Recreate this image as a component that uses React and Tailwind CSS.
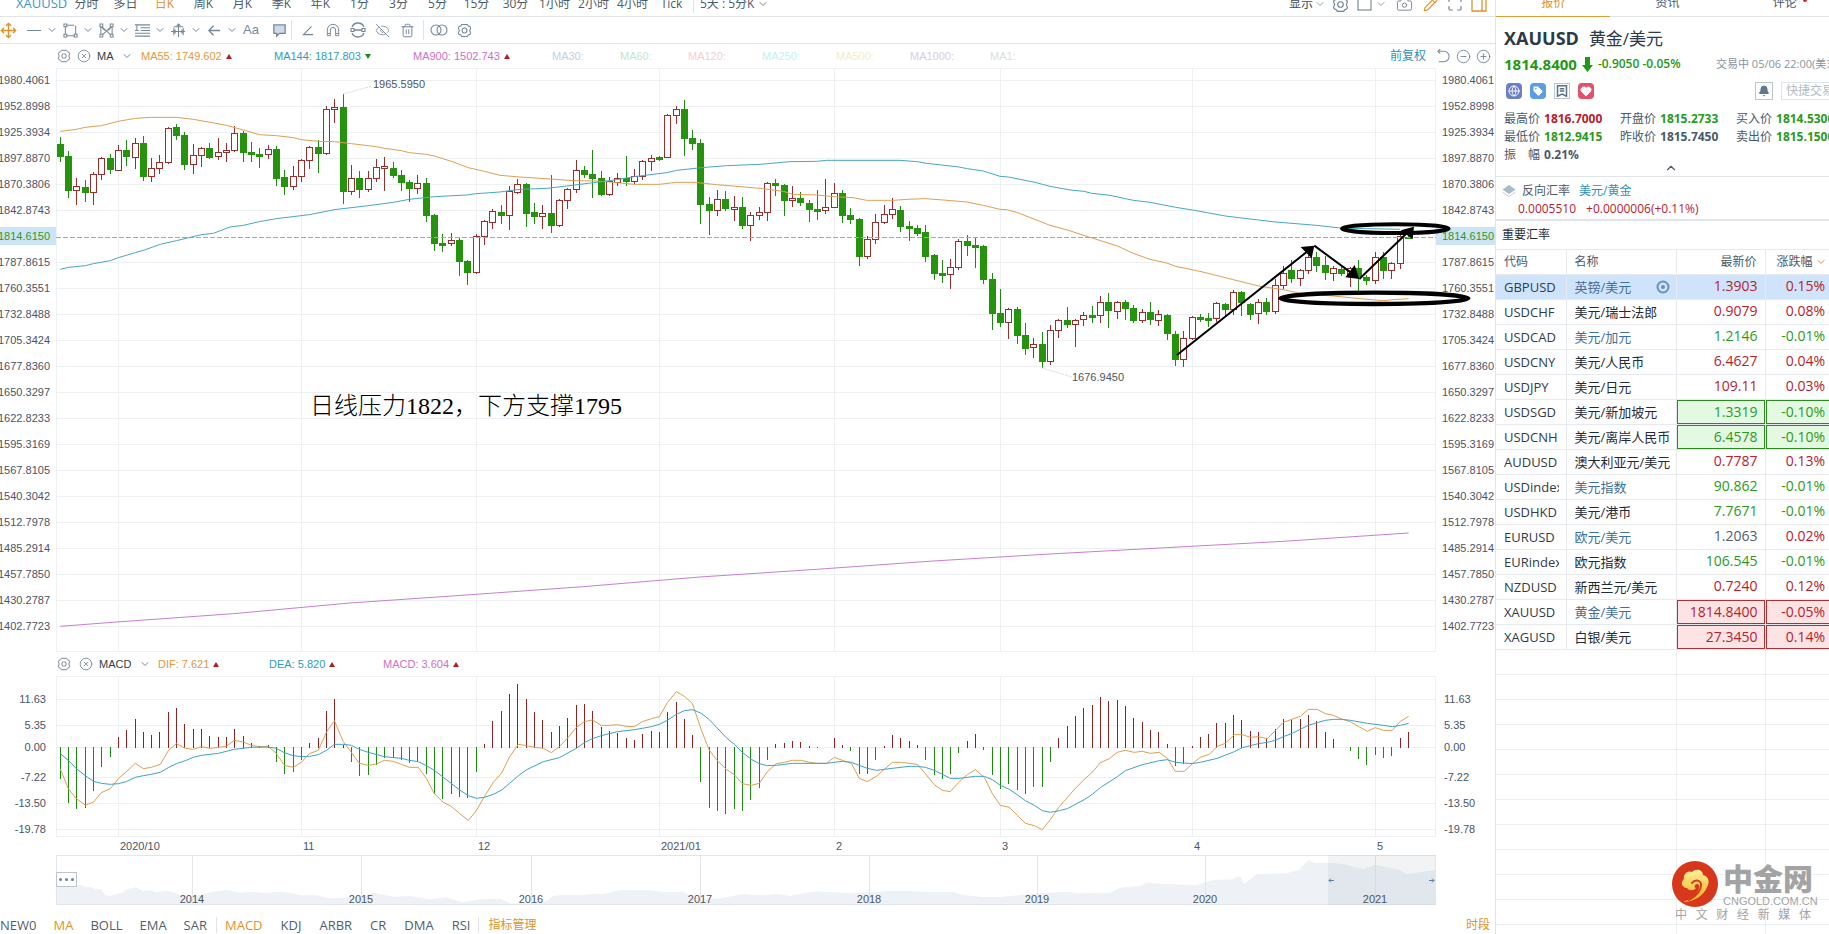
import {
  Move,
  ChevronDown,
  ChevronUp,
  EyeOff,
  Trash2,
  Camera,
  Pencil,
  Maximize,
  Globe,
  Tag,
  Heart,
  Bell,
  CircleMinus,
  CirclePlus,
  CircleX,
} from "lucide-react";

/* ---------- data ---------- */

// direction, high, body top, body bottom, low (plot units, 3 per pixel)
const CANDLES = `G411,432,470,486 G453,468,572,594 R534,559,571,614 G540,561,578,606 R516,523,577,614 R471,475,524,539
G462,474,510,521 R436,451,512,514 G420,450,471,497 R414,430,472,506 G408,429,530,542 R474,505,530,545
R465,487,506,521 R381,385,488,491 G372,381,407,419 G396,405,494,509 R432,466,493,521 R441,445,466,501
G429,444,474,476 R414,457,470,479 R429,451,458,486 R378,400,452,455 G393,399,458,486 G426,456,464,486
G444,462,470,503 R435,448,463,476 G438,447,536,557 G510,531,560,584 R498,529,560,569 R477,481,530,545
R438,442,482,506 G420,441,461,518 R318,328,461,464 R297,322,328,369 G282,321,575,611 R495,535,575,584
G513,534,569,593 R513,535,568,575 R477,502,536,545 R471,499,506,572 G486,504,527,533 G510,525,548,572
G540,546,566,605 R525,550,566,581 G534,549,647,665 G642,645,731,752 G702,729,737,755 R699,721,731,737
G714,720,785,827 G780,783,818,854 R703,709,818,821 R660,664,710,734 R627,634,668,686 G616,636,647,671
R558,574,647,689 R537,553,578,581 G549,552,641,680 G609,636,650,671 R615,640,649,686 G525,639,677,698
R596,601,677,680 R564,568,601,626 R480,511,569,578 G498,510,524,533 G450,522,536,593 G513,534,584,587
R530,544,584,587 R519,535,548,557 G468,535,545,557 R507,529,545,551 R480,484,530,539 R465,475,485,513
G468,471,480,483 R342,346,473,474 R318,328,346,371 G300,327,416,467 G390,414,431,449 G417,429,614,672
G591,612,632,704 R570,598,632,647 G573,597,626,632 R588,622,628,662 G591,621,677,686 R636,646,677,722
R621,637,647,659 R546,550,637,662 G537,549,557,587 G552,555,602,647 R558,595,602,620 G576,594,609,617
G600,609,629,665 G570,627,635,659 R537,622,632,641 R549,580,623,623 G570,579,647,668 G624,645,659,671
G654,657,770,797 R708,718,770,776 R642,667,718,731 R615,643,668,671 R594,628,643,656 G618,630,680,695
G663,678,686,722 G675,684,701,707 G675,696,770,785 G762,765,821,840 G780,818,827,848 R777,802,824,867
R717,724,803,810 G705,723,737,767 G714,735,743,804 G735,738,839,851 G819,837,941,989 G867,939,968,980
R925,928,968,1016 G921,927,1007,1031 G969,1005,1046,1065 R1014,1033,1043,1074 G996,1032,1085,1103 R975,991,1084,1094
R957,961,992,1013 G921,960,974,983 R957,961,974,1041 R936,946,959,977 G918,945,953,968 R888,907,947,968
G879,906,932,983 R903,907,935,956 G900,906,926,961 G915,924,962,968 R927,937,962,968 G906,936,960,974
R930,943,962,977 G942,945,1001,1019 G993,1002,1079,1098 R993,1015,1079,1100 R948,952,1016,1019 G942,951,959,965
G939,954,962,980 R906,910,956,965 G909,912,929,947 R870,877,929,944 G873,876,908,947 G909,911,944,959
R897,907,941,971 G894,906,935,944 R837,856,935,941 R798,820,857,866 G780,810,836,848 R808,811,836,857
R765,772,812,821 G756,771,797,815 G768,795,818,839 R798,805,820,842 G800,807,821,827 R800,805,822,860
G780,804,832,873 G826,831,842,854 R756,772,842,851 G756,771,812,836 R786,790,811,836 R700,709,791,806
G705,711,716,718`
  .split(/\s+/)
  .map((s) => ({ up: s[0] === "R", v: s.slice(1).split(",").map(Number) }));

const MA55 =
  "181,394 229,388 256,382 304,377 355,364 406,355 455,352 529,352 580,358 631,367 679,376 730,390 778,404 829,407 880,413 904,419 955,424 1003,425 1054,431 1129,440 1153,445 1204,452 1228,458 1279,463 1303,468 1354,484 1405,503 1453,514 1500,526 1560,531 1650,537 1720,542 1790,543 1850,548 1903,553 1978,553 2029,547 2085,547 2150,554 2280,565 2350,574 2378,583 2450,585 2500,590 2560,593 2600,601 2680,601 2720,598 2775,596 2830,600 2900,606 2950,616 3000,628 3020,629 3053,638 3150,676 3202,690 3270,712 3352,738 3400,760 3450,778 3500,789 3527,799 3600,814 3700,839 3780,859 3850,869 3900,880 4000,888 4080,896 4150,902 4180,899 4226,896";
const MA144 =
  "181,808 205,802 256,797 280,791 331,782 355,773 406,758 430,751 481,733 529,722 604,704 640,700 690,681 730,676 778,665 829,656 928,644 1003,629 1105,617 1180,607 1228,598 1303,590 1400,585 1429,581 1500,576 1560,568 1640,565 1700,558 1780,548 1850,539 1903,530 2000,518 2030,511 2104,503 2180,497 2280,493 2370,485 2450,484 2480,481 2700,481 2752,485 2780,490 2877,501 2902,506 2950,513 3000,529 3025,531 3105,547 3150,559 3210,570 3252,574 3275,580 3330,586 3400,601 3450,607 3527,622 3577,630 3676,648 3750,657 3826,666 3900,672 3950,676 4020,684 4100,686 4200,688";
const MA900 =
  "181,1879 350,1866 700,1841 1050,1809 1400,1785 1750,1760 2100,1731 2450,1708 2800,1683 3150,1662 3500,1643 3850,1624 4226,1599";

const MACD_BARS = [
  417, 488, 506, 503, 452, 380, 350, 291, 270, 238, 276, 286, 276, 216, 204, 252, 267, 267, 289, 292, 291, 267, 289,
  310, 318, 316, 365, 401, 395, 359, 310, 294, 213, 177, 314, 365, 407, 404, 374, 353, 353, 359, 368, 362, 401, 461,
  476, 461, 470, 473, 395, 313, 243, 213, 162, 132, 177, 216, 240, 276, 258, 234, 195, 192, 213, 261, 274, 279, 294,
  300, 283, 274, 277, 216, 186, 237, 286, 425, 503, 512, 521, 506, 512, 479, 443, 359, 313, 310, 304, 307, 318, 325,
  322, 294, 316, 332, 401, 401, 359, 318, 286, 294, 304, 316, 359, 404, 416, 401, 338, 304, 282, 329, 404, 446, 431,
  449, 461, 440, 440, 365, 294, 258, 228, 204, 195, 171, 183, 180, 198, 234, 247, 270, 277, 313, 377, 371, 318, 291,
  283, 250, 250, 225, 240, 273, 276, 297, 267, 237, 240, 237, 225, 243, 277, 297, 322, 333, 356, 374, 344, 353, 347,
  294, 276,
];
const DIF =
  "181,387 205,446 229,476 256,495 280,487 304,458 331,446 355,416 379,395 406,370 430,386 454,382 481,373 505,332 529,311 556,325 580,328 604,320 631,325 679,319 703,301 730,306 754,316 778,320 805,319 829,340 853,376 880,382 904,367 928,341 955,331 979,277 1003,242 1030,305 1054,337 1078,370 1105,376 1129,372 1153,361 1180,364 1204,373 1228,382 1255,382 1279,415 1303,461 1330,487 1354,499 1378,520 1405,541 1429,512 1453,470 1480,427 1505,399 1529,350 1555,313 1580,317 1603,322 1630,325 1654,338 1678,320 1703,294 1729,262 1753,245 1777,240 1804,256 1828,256 1852,254 1879,259 1903,260 1927,245 1954,236 1978,230 2002,188 2029,155 2053,169 2077,190 2104,270 2128,331 2152,362 2179,388 2203,404 2227,431 2254,436 2278,430 2302,395 2329,371 2353,367 2377,361 2404,361 2428,367 2452,370 2479,370 2503,352 2527,361 2554,370 2578,415 2602,425 2629,409 2653,388 2677,367 2704,367 2752,373 2776,401 2803,434 2827,451 2851,455 2878,425 2902,404 2926,389 2953,412 2977,461 3001,496 3028,502 3052,526 3076,550 3103,557 3127,569 3151,539 3178,500 3226,445 3253,418 3277,397 3301,368 3328,356 3352,337 3376,331 3403,337 3427,334 3451,340 3478,337 3502,355 3526,394 3553,394 3577,371 3601,352 3628,343 3652,319 3676,310 3703,284 3727,284 3751,292 3775,290 3802,296 3826,272 3850,247 3901,229 3925,208 3952,208 3976,221 4000,226 4027,238 4051,245 4075,259 4102,274 4126,263 4150,271 4177,271 4201,244 4226,229";
const DEA =
  "181,341 205,361 229,386 256,407 280,424 304,430 331,433 355,431 379,425 406,412 430,407 454,403 481,397 505,383 529,371 556,362 580,352 604,346 631,343 655,340 679,334 703,328 754,322 805,321 829,325 853,338 880,347 904,350 928,349 955,344 979,331 1003,313 1030,313 1054,316 1078,328 1105,337 1153,350 1204,355 1228,361 1255,365 1279,377 1303,391 1330,412 1378,449 1405,467 1429,475 1453,472 1480,463 1505,450 1529,430 1555,407 1580,389 1630,365 1678,353 1729,325 1753,308 1777,296 1804,287 1852,275 1903,269 1927,265 1954,260 1978,253 2002,241 2029,223 2053,212 2077,209 2104,220 2128,239 2179,293 2203,313 2227,337 2254,358 2278,371 2302,377 2329,376 2377,370 2479,370 2527,364 2554,367 2602,385 2629,391 2677,385 2728,379 2752,379 2776,382 2803,391 2851,415 2878,415 2926,409 2953,409 2977,419 3001,436 3028,448 3052,464 3076,482 3103,496 3127,512 3151,517 3178,512 3202,506 3253,479 3277,463 3301,443 3352,410 3376,392 3427,374 3478,362 3502,359 3526,367 3577,371 3601,367 3652,355 3703,335 3727,323 3751,317 3775,311 3802,307 3826,301 3850,290 3877,280 3901,268 3925,256 3952,248 3976,241 4000,238 4027,238 4051,241 4102,250 4150,256 4177,260 4201,256 4226,250";
const HISTORY =
  "169,742 240,735 262,742 270,740 285,747 303,747 315,765 330,768 370,757 375,750 405,742 430,752 450,750 470,757 500,752 515,755 545,767 577,770 640,755 680,750 720,758 760,755 800,760 830,755 870,758 900,766 950,766 980,773 1010,775 1084,768 1120,758 1180,770 1230,768 1290,778 1340,772 1370,782 1390,787 1440,778 1500,776 1535,792 1560,790 1600,790 1640,782 1660,767 1700,764 1740,766 1780,762 1810,763 1830,758 1860,750 1950,751 2000,757 2050,755 2075,770 2100,777 2160,775 2230,762 2280,766 2330,762 2370,768 2410,760 2450,754 2500,757 2560,759 2620,756 2660,753 2740,753 2800,757 2860,756 2890,765 2950,771 3000,771 3060,765 3140,758 3200,756 3240,760 3330,758 3360,743 3420,738 3440,728 3500,732 3590,735 3640,720 3700,718 3715,707 3725,715 3732,733 3745,722 3770,702 3860,700 3900,688 3925,659 3945,670 3980,668 4030,672 4060,680 4090,688 4126,674 4200,690 4220,703 4305,690";

const PRICES = [
  "1980.4061", "1952.8998", "1925.3934", "1897.8870", "1870.3806", "1842.8743", "1814.6150", "1787.8615",
  "1760.3551", "1732.8488", "1705.3424", "1677.8360", "1650.3297", "1622.8233", "1595.3169", "1567.8105",
  "1540.3042", "1512.7978", "1485.2914", "1457.7850", "1430.2787", "1402.7723",
];
const CURRENT = "1814.6150";

const MONTHS = [
  [118, "2020/10"], [301, "11"], [476, "12"], [659, "2021/01"], [834, "2"], [1000, "3"], [1192, "4"], [1375, "5"],
];
const YEARS = [
  [192, "2014"], [361, "2015"], [531, "2016"], [700, "2017"], [869, "2018"], [1037, "2019"], [1205, "2020"], [1375, "2021"],
];

const QUOTES = [
  ["GBPUSD", "英镑/美元", "1.3903", "0.15%", "r", true],
  ["USDCHF", "美元/瑞士法郎", "0.9079", "0.08%", "r"],
  ["USDCAD", "美元/加元", "1.2146", "-0.01%", "g", true],
  ["USDCNY", "美元/人民币", "6.4627", "0.04%", "r"],
  ["USDJPY", "美元/日元", "109.11", "0.03%", "r"],
  ["USDSGD", "美元/新加坡元", "1.3319", "-0.10%", "G"],
  ["USDCNH", "美元/离岸人民币", "6.4578", "-0.10%", "G"],
  ["AUDUSD", "澳大利亚元/美元", "0.7787", "0.13%", "r"],
  ["USDindex", "美元指数", "90.862", "-0.01%", "g", true],
  ["USDHKD", "美元/港币", "7.7671", "-0.01%", "g"],
  ["EURUSD", "欧元/美元", "1.2063", "0.02%", "n", true],
  ["EURindex", "欧元指数", "106.545", "-0.01%", "g"],
  ["NZDUSD", "新西兰元/美元", "0.7240", "0.12%", "r"],
  ["XAUUSD", "黄金/美元", "1814.8400", "-0.05%", "R", true],
  ["XAGUSD", "白银/美元", "27.3450", "0.14%", "R"],
];

const TONES = {
  r: "text-[#b5222e]",
  g: "text-[#2b9a1e]",
  n: "text-[#4f5f73]",
  R: "text-[#b5222e] bg-[#fde3e4] border border-[#a8323a]",
  G: "text-[#2b9a1e] bg-[#e4f9e2] border border-[#2d8a20]",
};

const LEFT = 56;
const WIDTH = 1380;
const barX = (i) => Math.floor(60.1 + i * 8.323);
const pct = (x) => `${((x - LEFT) / WIDTH) * 100}%`;

/* ---------- small pieces ---------- */

function Ico({ children, size = 15, className = "" }) {
  return (
    <svg width={size} height={size} viewBox="0 0 16 16" fill="none" stroke="currentColor" strokeWidth="1.1" className={className}>
      {children}
    </svg>
  );
}

function Hex({ size = 15 }) {
  return (
    <Ico size={size}>
      <path d="M5 1.5h6l1 1.7 2 .8.5 1.5-1 2.5 1 2.5-.5 1.5-2 .8-1 1.7H5l-1-1.7-2-.8-.5-1.5 1-2.5-1-2.5L2 4l2-.8z" />
      <circle cx="8" cy="8" r="2.6" />
    </Ico>
  );
}

function Tri({ down, className = "" }) {
  return (
    <svg width="6" height="5" viewBox="0 0 6 5" className={className}>
      {down ? <path d="M0 0h6L3 5z" fill="#1f8a12" /> : <path d="M0 5h6L3 0z" fill="#b01c24" />}
    </svg>
  );
}

function Tool({ label, children }) {
  return (
    <button aria-label={label} aria-haspopup="menu" className="flex w-9 items-center gap-1">
      {children}
      <ChevronDown size={12} strokeWidth={2} />
    </button>
  );
}

function Icon25({ label, children }) {
  return (
    <button aria-label={label} className="flex w-[25px] items-center justify-center">
      {children}
    </button>
  );
}

/* ---------- top bars ---------- */

function PeriodBar() {
  const periods = ["分时", "多日", "日K", "周K", "月K", "季K", "年K", "1分", "3分", "5分", "15分", "30分", "1小时", "2小时", "4小时", "Tick"];
  return (
    <header className="h-[17px] shrink-0 overflow-hidden border-b border-[#dfe4e8]">
      <div className="-mt-2 flex h-6 items-center text-[12px] text-[#4b5a69]">
        <button className="w-[67px] pl-4 text-left text-[13px] text-[#3b97c9]">XAUUSD</button>
        {periods.map((p) => (
          <button key={p} className={p === "日K" ? "w-[39px] text-[#e0932a]" : "w-[39px] whitespace-nowrap"}>
            {p}
          </button>
        ))}
        <button className="ml-[2px] flex items-center gap-[3px] border-l border-[#dfe4e8] pl-[6px]">
          5天 : 5分K <ChevronDown size={12} strokeWidth={1.5} />
        </button>
        <div className="ml-auto flex items-center text-[#6f8396]">
          <button className="flex w-[43px] items-center text-[#3c4a58]">
            显示 <ChevronDown size={12} strokeWidth={1.5} className="ml-px text-[#6f8396]" />
          </button>
          <button aria-label="设置" className="w-[25px]"><Hex size={17} /></button>
          <button aria-label="布局" className="flex w-[39px] items-center gap-[2px]">
            <Ico size={16}><rect x="1" y="1" width="13" height="13" /></Ico>
            <ChevronDown size={12} strokeWidth={1.5} />
          </button>
          <button aria-label="截图" className="w-[27px]"><Camera size={17} strokeWidth={1.3} /></button>
          <button aria-label="画线" className="w-6 text-[#e0932a]"><Pencil size={15} strokeWidth={1.8} /></button>
          <button aria-label="全屏" className="w-6"><Maximize size={16} strokeWidth={1.8} /></button>
          <button aria-label="侧栏" className="w-6 text-[#e0932a]">
            <Ico size={16}><path d="M1 1h14v14H1zM11 1v14" strokeWidth="1.3" /></Ico>
          </button>
        </div>
      </div>
    </header>
  );
}

function DrawBar() {
  return (
    <div className="flex h-[27px] shrink-0 items-center border-b border-[#dfe4e8] text-[#75899b]">
      <button aria-label="移动" className="w-[27px] text-[#e0932a]"><Move size={17} strokeWidth={2} /></button>
      <Tool label="直线"><Ico><path d="M0 8h15" /></Ico></Tool>
      <Tool label="矩形">
        <Ico><path d="M3 2.500h9M3 13.500h9M2.500 3v10M13.500 3v9" /><path d="M1 1h3v3H1zM12 12h3v3h-3zM1 12h3v3H1z" fill="#fff" /></Ico>
      </Tool>
      <Tool label="形态">
        <Ico><path d="M2 14V3l12 11V3L2 14M2 3l4 5M14 3l-4 5" /><path d="M1 1h3v3H1zM12 1h3v3h-3zM1 12h3v3H1zM12 12h3v3h-3z" fill="#fff" /></Ico>
      </Tool>
      <Tool label="斐波那契">
        <Ico><path d="M0 2h16M6 5h10M0 8h4M6 8h10M0 11h16M0 14h16M2 2v6" /></Ico>
      </Tool>
      <Tool label="测量">
        <Ico><path d="M0 9h15M8 1v14M3 5v8M13 5v8M3 4h10M6 3l2-2 2 2M5 7L3 9l2 2M11 7l2 2-2 2" /></Ico>
      </Tool>
      <Tool label="箭头"><Ico><path d="M14 8H2M7 3L2 8l5 5" strokeWidth="1.400" /></Ico></Tool>
      <button className="w-6 text-left font-['Liberation_Sans',sans-serif] text-[13px]">Aa</button>
      <button aria-label="注释" className="flex w-6 justify-center">
        <Ico><path d="M2 2h12v9H8l-3 3v-3H2z" fill="#cfdbe6" strokeWidth="1.400" /></Ico>
      </button>
      <span className="h-5 w-px bg-[#dfe4e8]" />
      <div className="flex px-[3px]">
        <Icon25 label="角度"><Ico size={13}><path d="M13 3L3 13h12" strokeWidth="1.400" /></Ico></Icon25>
        <Icon25 label="磁铁">
          <Ico size={14}><path d="M1.500 14.500V8a6.500 6.500 0 0 1 13 0v6.500h-3.500V8a3 3 0 0 0-6 0v6.500zM1.500 12H5M11 12h3.500" /></Ico>
        </Icon25>
        <Icon25 label="连续画线">
          <Ico size={16}><path d="M2 5a6.500 6.500 0 0 1 12 0M2 11a6.500 6.500 0 0 0 12 0M4 8h8" strokeWidth="1.300" /><path d="M1 6.500h3v3H1zM12 6.500h3v3h-3z" /></Ico>
        </Icon25>
        <Icon25 label="隐藏"><EyeOff size={15} strokeWidth={1.4} /></Icon25>
        <Icon25 label="删除"><Trash2 size={15} strokeWidth={1.6} /></Icon25>
      </div>
      <span className="h-5 w-px bg-[#dfe4e8]" />
      <button aria-label="叠加" className="w-[33px] pl-[6px]">
        <svg width="18" height="12" viewBox="0 0 18 12" fill="none" stroke="currentColor" strokeWidth="1.100">
          <circle cx="6" cy="6" r="5" /><circle cx="12" cy="6" r="5" />
        </svg>
      </button>
      <button aria-label="画线设置"><Hex /></button>
    </div>
  );
}

/* ---------- charts ---------- */

function MaHeader() {
  return (
    <div className="flex h-6 shrink-0 items-center pl-[57px] font-['Liberation_Sans','Noto_Sans_CJK_SC',sans-serif] text-[11px] text-[#75899b]">
      <button aria-label="指标设置" className="w-5"><Hex size={14} /></button>
      <button aria-label="关闭指标" className="w-5"><CircleX size={14} strokeWidth={1.5} /></button>
      <label className="flex w-11 items-center">
        <select aria-label="主图指标" className="w-6 appearance-none text-[11px] text-[#333e4a]"><option>MA</option></select>
        <ChevronDown size={12} strokeWidth={2} />
      </label>
      <span className="flex w-[133px] items-center gap-1 text-[#dd9a3f]">MA55: 1749.602 <Tri /></span>
      <span className="flex w-[139px] items-center gap-1 text-[#2f9dba]">MA144: 1817.803 <Tri down /></span>
      <span className="flex w-[139px] items-center gap-1 text-[#c872cc]">MA900: 1502.743 <Tri /></span>
      <span className="w-[68px] text-[#bcd2ea]">MA30:</span>
      <span className="w-[68px] text-[#c2e6d0]">MA60:</span>
      <span className="w-[74px] text-[#f3cfcf]">MA120:</span>
      <span className="w-[74px] text-[#c3eff5]">MA250:</span>
      <span className="w-[74px] text-[#f3edc0]">MA500:</span>
      <span className="w-20 text-[#dccbe6]">MA1000:</span>
      <span className="text-[#dddddd]">MA1:</span>
      <div className="ml-auto flex items-center gap-[5px] pr-1">
        <button className="mr-[5px] text-[12px] text-[#2f8fc0]">前复权</button>
        <button aria-label="重置"><Ico><path d="M2 2.500h6.500a5.500 5.500 0 0 1 0 11H3M4.500 0L2 2.500 4.500 5" /></Ico></button>
        <button aria-label="缩小"><CircleMinus size={15} strokeWidth={1.5} /></button>
        <button aria-label="放大"><CirclePlus size={15} strokeWidth={1.5} /></button>
      </div>
    </div>
  );
}

function PriceAxis({ right }) {
  return (
    <div className={right ? "w-[59px] shrink-0" : "w-14 shrink-0 overflow-hidden"}>
      <div className="-mt-px flex flex-col">
        {PRICES.map((p) => (
          <div key={p} className="flex h-[26px] items-center">
            <span
              className={
                (right ? "w-full pl-[6px] " : "flex w-full justify-end pr-[6px] ") +
                (p === CURRENT ? "bg-[#cde4f7] text-[#2b9a1e] leading-[18px]" : "leading-[18px]")
              }
            >
              {p}
            </span>
          </div>
        ))}
      </div>
    </div>
  );
}

function Candle({ i, up, v }) {
  const [hi, top, bot, lo] = v;
  const x = barX(i);
  if (up) {
    const t = Math.floor(top / 3);
    const b = Math.floor(bot / 3);
    return (
      <>
        <path d={`M${x + 0.5} ${Math.round(hi / 3)}V${Math.round(lo / 3)}`} stroke="#96302f" />
        <rect x={x - 2.5} y={t + 0.5} width="6" height={Math.max(b - t, 2)} fill="#fff" stroke="#96302f" />
      </>
    );
  }
  const t = Math.round(top / 3);
  return (
    <>
      <path d={`M${x + 0.5} ${Math.round(hi / 3)}V${Math.round(lo / 3)}`} stroke="#1f8a12" />
      <rect x={x - 3} y={t} width="7" height={Math.max(Math.round(bot / 3) - t, 2)} fill="#26930f" />
    </>
  );
}

function Curve({ points, color }) {
  return <polyline points={points} fill="none" stroke={color} strokeWidth="1" vectorEffect="non-scaling-stroke" transform="scale(0.33333)" />;
}

function PriceChart() {
  return (
    <div className="relative z-10 min-w-0 flex-1">
      <svg viewBox="56 68 1380 584" preserveAspectRatio="none" className="h-[584px] w-full overflow-visible">
        <g shapeRendering="crispEdges" stroke="#edf1f3">
          <rect x="56.5" y="68.5" width="1379" height="583" fill="none" />
          {PRICES.map((p, i) => p !== CURRENT && <path key={p} d={`M56 ${80.5 + i * 26}h1380`} />)}
          {MONTHS.map(([x]) => (
            <path key={x} d={`M${x + 0.5} 68v584`} />
          ))}
        </g>
        <g shapeRendering="crispEdges">
          {CANDLES.map((c, i) => (
            <Candle key={i} i={i} up={c.up} v={c.v} />
          ))}
        </g>
        <path d="M56 237.500H1436" stroke="#d6a05a" strokeDasharray="5 2" />
        <Curve points={MA55} color="#dda052" />
        <Curve points={MA144} color="#48a7c2" />
        <Curve points={MA900} color="#c77fd0" />
        <path d="M343 94l29-8M1042 368l30 9" stroke="#d5dade" strokeDasharray="2 1" />
        {/* hand-drawn trend marks */}
        <g transform="scale(0.33333)" fill="none" stroke="#000">
          <ellipse cx="4186" cy="686" rx="160" ry="13" strokeWidth="12" />
          <ellipse cx="4123" cy="895" rx="282" ry="17" strokeWidth="13" />
          <path d="M3531 1065L3930 748M3943 737L4065 827M4078 837L4228 692" strokeWidth="6" />
          <path d="M3943 737l-41 4 33 34zM4078 837l-14-42-28 37zM4242 680l-40 11 36 27z" fill="#000" stroke="none" />
        </g>
      </svg>
      <span className="absolute top-2 left-[317px] leading-4">1965.5950</span>
      <span className="absolute top-[301px] left-[1016px] leading-4">1676.9450</span>
      <p className="absolute top-[322px] left-[254px] font-['Liberation_Serif','Noto_Sans_CJK_SC',serif] text-[24px] leading-8 font-light text-black">
        日线压力1822，下方支撑1795
      </p>
    </div>
  );
}

function MacdHeader() {
  return (
    <div className="flex h-6 shrink-0 items-center pl-[57px] font-['Liberation_Sans',sans-serif] text-[11px] text-[#75899b]">
      <button aria-label="指标设置" className="w-[22px]"><Hex size={14} /></button>
      <button aria-label="关闭指标" className="w-5"><CircleX size={14} strokeWidth={1.5} /></button>
      <label className="flex w-[59px] items-center">
        <select aria-label="副图指标" className="w-10 appearance-none text-[11px] text-[#333e4a]"><option>MACD</option></select>
        <ChevronDown size={12} strokeWidth={2} />
      </label>
      <span className="flex w-[111px] items-center gap-1 text-[#dd9a3f]">DIF: 7.621 <Tri /></span>
      <span className="flex w-[114px] items-center gap-1 text-[#2f9dba]">DEA: 5.820 <Tri /></span>
      <span className="flex items-center gap-1 text-[#c872cc]">MACD: 3.604 <Tri /></span>
    </div>
  );
}

function MacdAxis({ right }) {
  const cls = right ? "w-[59px] pl-2" : "w-14 pr-[10px] text-right";
  return (
    <div className={cls + " h-[161px] shrink-0 pt-[10px] leading-[26px]"}>
      <div>11.63</div>
      <div className="h-6">5.35</div>
      <div className="h-[28px] leading-[22px]">0.00</div>
      <div>-7.22</div>
      <div>-13.50</div>
      <div>-19.78</div>
    </div>
  );
}

function MacdChart() {
  return (
    <div className="min-w-0 flex-1">
      <svg viewBox="56 36 1380 161" preserveAspectRatio="none" className="h-[161px] w-full">
        <g shapeRendering="crispEdges" stroke="#edf1f3">
          <rect x="56.5" y="36.5" width="1379" height="160" fill="none" />
          {[59, 85, 107, 137, 163, 189].map((y) => (
            <path key={y} d={`M56 ${y + 0.5}h1380`} />
          ))}
          {MONTHS.map(([x]) => (
            <path key={x} d={`M${x + 0.5} 36v161`} />
          ))}
        </g>
        <g shapeRendering="crispEdges">
          {MACD_BARS.map((v, i) => (
            <path key={i} d={`M${barX(i) + 0.5} ${v < 322 ? 108 : 107}V${Math.round(v / 3)}`} stroke={v < 322 ? "#8c2424" : "#1f8a12"} />
          ))}
        </g>
        <Curve points={DIF} color="#dda052" />
        <Curve points={DEA} color="#3fa3c4" />
      </svg>
    </div>
  );
}

function Navigator() {
  return (
    <div className="relative mr-[59px] ml-14 h-[50px] shrink-0">
      <svg viewBox="56 215 1380 50" preserveAspectRatio="none" className="h-full w-full">
        <polygon points={`169,795 ${HISTORY} 4305,795`} fill="#eef2f6" transform="scale(0.33333)" />
        <g shapeRendering="crispEdges" stroke="#e1e6ea" fill="none">
          <rect x="56.5" y="215.5" width="1379" height="49" />
          {YEARS.map(([x]) => (
            <path key={x} d={`M${x + 0.5} 215v50`} />
          ))}
        </g>
        <rect x="1328" y="215" width="107" height="50" fill="#8a9bab" opacity="0.12" />
        <path d="M1334 240.500h-5m2-2l-2 2 2 2M1429 240.500h5m-2-2l2 2-2 2" stroke="#5d7ea0" fill="none" />
      </svg>
      {YEARS.map(([x, y]) => (
        <span key={y} className="absolute bottom-0 -translate-x-1/2 leading-3" style={{ left: pct(x) }}>
          {y}
        </span>
      ))}
      <button aria-label="更多" className="absolute top-[17px] left-0 flex h-[15px] w-[21px] items-center justify-center gap-[3px] border border-[#b9c6d2] bg-white">
        <i className="size-[3px] rounded-full bg-[#6f8396]" />
        <i className="size-[3px] rounded-full bg-[#6f8396]" />
        <i className="size-[3px] rounded-full bg-[#6f8396]" />
      </button>
    </div>
  );
}

function IndicatorBar() {
  const item = (t) => (
    <button key={t} className={t === "MA" || t === "MACD" ? "text-[#e0932a]" : ""}>
      {t}
    </button>
  );
  return (
    <footer className="flex items-center pt-3 text-[13px] leading-4 text-[#4f5f70]">
      <div className="flex gap-[17px] pr-[9px]">{["NEW0", "MA", "BOLL", "EMA", "SAR"].map(item)}</div>
      <div className="flex gap-[18px] border-x border-[#dfe4e8] px-2">
        {["MACD", "KDJ", "ARBR", "CR", "DMA", "RSI"].map(item)}
      </div>
      <button className="ml-[9px] text-[12px] text-[#e0932a]">指标管理</button>
      <button className="mr-[5px] ml-auto text-[12px] text-[#e0932a]">时段</button>
    </footer>
  );
}

/* ---------- side panel ---------- */

function Stat({ label, value, tone }) {
  return (
    <div className="flex gap-1">
      <dt className="whitespace-pre">{label}</dt>
      <dd className={"font-bold " + tone}>{value}</dd>
    </div>
  );
}

function Quote() {
  return (
    <section className="border-b border-[#dfe4e8] pl-2 text-[12px] text-[#4b5a69]">
      <h1 className="flex items-center gap-[10px] pt-2 leading-[27px] text-[#2b3a48]">
        <b className="text-[18px]">XAUUSD</b>
        <span className="text-[17px]">黄金/美元</span>
      </h1>
      <div className="flex h-6 items-center font-bold text-[#1f9a12]">
        <span className="text-[15px]">1814.8400</span>
        <svg width="11" height="15" viewBox="0 0 11 15" className="mx-[5px]" fill="currentColor"><path d="M3 0h5v8h3l-5.500 7L0 8h3z" /></svg>
        <span className="font-semibold">-0.9050 -0.05%</span>
        <span className="ml-auto w-[131px] text-[11px] font-normal whitespace-nowrap text-[#8794a2]">交易中 05/06 22:00(美东)</span>
      </div>
      <div className="flex h-[30px] items-center gap-2 pl-[2px] text-white">
        <span className="flex size-4 items-center justify-center rounded-sm bg-[#6a7fc4]"><Globe size={12} strokeWidth={1.8} /></span>
        <span className="flex size-4 items-center justify-center rounded-sm bg-[#5c9ee0]"><Tag size={12} fill="white" stroke="#5c9ee0" /></span>
        <span className="flex size-4 items-center justify-center border border-[#b9c6d2] text-[#5a7186]">
          <Ico size={12}><path d="M2 1h12v14l-6-3-6 3zM5 5h6M5 8h6" strokeWidth="2" /></Ico>
        </span>
        <span className="flex size-4 items-center justify-center rounded-sm bg-[#e2506a]"><Heart size={12} fill="white" /></span>
        <button aria-label="提醒" className="ml-auto flex size-[18px] items-center justify-center border border-[#b9c6d2] text-[#5f788e]">
          <Bell size={12} fill="currentColor" />
        </button>
        <input aria-label="快捷交易" placeholder="快捷交易" className="h-[18px] w-[66px] border border-[#dfe4e8] pl-1 text-[12px] placeholder:text-[#b3bcc5]" />
      </div>
      <dl className="grid grid-cols-[116px_116px_116px] pt-1 leading-[18px]">
        <Stat label="最高价" value="1816.7000" tone="text-[#b5222e]" />
        <Stat label="开盘价" value="1815.2733" tone="text-[#2b9a1e]" />
        <Stat label="买入价" value="1814.5300" tone="text-[#2b9a1e]" />
        <Stat label="最低价" value="1812.9415" tone="text-[#2b9a1e]" />
        <Stat label="昨收价" value="1815.7450" tone="text-[#4b5a69]" />
        <Stat label="卖出价" value="1815.1500" tone="text-[#2b9a1e]" />
        <Stat label="振　幅" value="0.21%" tone="text-[#4b5a69]" />
      </dl>
      <button aria-label="收起" className="-mt-1 flex h-4 w-[333px] items-center justify-center"><ChevronUp size={14} strokeWidth={2} /></button>
    </section>
  );
}

function QuoteTable() {
  return (
    <table className="w-full table-fixed border-collapse text-[13px]">
      <colgroup>
        <col className="w-[70px]" />
        <col className="w-[110px]" />
        <col className="w-[89px]" />
        <col />
      </colgroup>
      <thead>
        <tr className="h-[25px] border-y border-[#e6eaee] text-[12px] text-[#4b5a69]">
          <th className="border-r border-[#e6eaee] p-0 pl-2 text-left font-normal">代码</th>
          <th className="border-r border-[#e6eaee] p-0 pl-2 text-left font-normal">名称</th>
          <th className="border-r border-[#e6eaee] p-0 pr-2 text-right font-normal">最新价</th>
          <th className="p-0 pl-[11px] text-left font-normal">
            <span className="flex items-center gap-[2px]">涨跌幅 <ChevronDown size={12} strokeWidth={2} className="text-[#e0932a]" /></span>
          </th>
        </tr>
      </thead>
      <tbody>
        {QUOTES.map(([code, name, last, chg, tone, fav], i) => {
          const boxed = tone === "R" || tone === "G";
          const chgTone = tone === "n" ? "r" : tone;
          return (
            <tr key={code} className={i === 0 ? "h-[25px] border-b border-[#e6eaee] bg-[#cfe4fb]" : "h-[25px] border-b border-[#e6eaee]"}>
              <td className="border-r border-[#e6eaee] p-0 pr-[7px] pl-2 text-[#2f3d4b]">
                <div className="overflow-hidden leading-5 whitespace-nowrap">{code}</div>
              </td>
              <td className="border-r border-[#e6eaee] p-0 pr-[6px] pl-2">
                <div className={"flex items-center overflow-hidden leading-5 whitespace-nowrap " + (fav ? "text-[#3f6f9a]" : "text-[#1f2b37]")}>
                  {name}
                  {i === 0 && (
                    <svg width="14" height="14" viewBox="0 0 14 14" className="ml-auto">
                      <circle cx="7" cy="7" r="5.500" fill="none" stroke="#6e8fb5" strokeWidth="2" />
                      <circle cx="7" cy="7" r="2" fill="#6e8fb5" />
                    </svg>
                  )}
                </div>
              </td>
              <td className="border-r border-[#e6eaee] p-0">
                <div className={"h-6 text-right text-[14px] leading-[22px] " + TONES[tone] + (boxed ? " pr-[6px]" : " pr-[7px]")}>{last}</div>
              </td>
              <td className="p-0">
                <div className={"h-6 text-right text-[14px] leading-[22px] " + TONES[chgTone] + (boxed ? " pr-[21px]" : " pr-[22px]")}>{chg}</div>
              </td>
            </tr>
          );
        })}
        {Array.from({ length: 12 }, (_, i) => (
          <tr key={i} className="h-[25px] border-b border-[#eceff2]">
            <td className="p-0" />
            <td className="border-r border-[#eceff2] p-0" />
            <td className="border-r border-[#eceff2] p-0" />
            <td className="p-0" />
          </tr>
        ))}
      </tbody>
    </table>
  );
}

function Brand() {
  return (
    <div className="absolute right-[15px] bottom-[11px] w-[142px] text-[#a3a3a3]">
      <div className="flex items-center gap-[5px]">
        <svg width="46" height="46" viewBox="0 0 46 46" className="shrink-0">
          <defs>
            <linearGradient id="cloud" x1="0" y1="0" x2="0" y2="1">
              <stop offset="0" stopColor="#fff09a" />
              <stop offset="1" stopColor="#f8ad1c" />
            </linearGradient>
          </defs>
          <circle cx="23" cy="23" r="23" fill="#d7371b" />
          <path
            d="M11 41c8-3 15-8 16-14 1-4-2-5-4-3-1 2 0 3 1 3-2 3-7 3-9 0-5 0-7-6-3-9-1-5 4-9 8-7 4-4 11-2 11 3 6 1 7 8 4 12-3 8-12 15-24 15z"
            fill="url(#cloud)"
          />
          <path d="M20 22c3-4 9-3 9 2 0 6-5 11-12 15" fill="none" stroke="#d7371b" strokeWidth="2" strokeLinecap="round" />
        </svg>
        <div>
          <div className="text-[30px] leading-[34px] font-black whitespace-nowrap">中金网</div>
          <div className="font-['Liberation_Sans',sans-serif] text-[11px] leading-[11px]">CNGOLD.COM.CN</div>
        </div>
      </div>
      <div className="flex justify-between px-[3px] text-[12px] leading-4">
        {[..."中文财经新媒体"].map((c) => (
          <span key={c}>{c}</span>
        ))}
      </div>
    </div>
  );
}

function SidePanel() {
  return (
    <aside className="relative w-[333px] shrink-0 overflow-hidden">
      <div className="w-[351px]">
        <div className="flex h-[17px] overflow-hidden text-[12px] text-[#4b5a69]">
          <button className="flex flex-1 items-start justify-center border-b border-[#e0a030] text-[#e0932a]"><span className="-mt-1.5">报价</span></button>
          <button className="flex flex-1 items-start justify-center border-b border-[#dfe4e8]"><span className="-mt-1.5">资讯</span></button>
          <button className="flex flex-1 items-start justify-center border-b border-[#dfe4e8] pl-2">
            <span className="-mt-1.5">评论</span>
            <i className="-mt-0.5 ml-1.5 size-1 rounded-full bg-[#d0202c]" />
          </button>
        </div>
        <Quote />
        <section className="border-b-2 border-[#dfe4e8] pt-[5px] pb-[2px] pl-[6px] text-[12px]">
          <div className="flex items-center leading-[18px] text-[#4b5a69]">
            <svg width="14" height="14" viewBox="0 0 14 14" className="mr-[6px]" fill="#a9bac8">
              <path d="M7 1l6.500 4.500L7 10 .5 5.500z" />
              <path d="M.5 8L7 12.500 13.500 8" fill="none" stroke="#c3cfd9" />
            </svg>
            反向汇率
            <a href="#usdxau" className="ml-[9px] text-[#2f8fc0]">美元/黄金</a>
          </div>
          <div className="flex gap-[10px] pl-4 leading-[17px] text-[#b5222e]">
            <span>0.0005510</span>
            <span>+0.0000006(+0.11%)</span>
          </div>
        </section>
        <h2 className="pl-[6px] text-[12px] leading-7 text-[#1f2b37]">重要汇率</h2>
        <QuoteTable />
      </div>
      <Brand />
    </aside>
  );
}

export default function App() {
  return (
    <div className="flex h-screen overflow-hidden bg-white font-['Open_Sans','Noto_Sans_CJK_SC',sans-serif]">
      <main className="flex min-w-0 flex-1 flex-col border-r border-[#dfe4e8]">
        <PeriodBar />
        <DrawBar />
        <MaHeader />
        <div className="flex shrink-0 font-['Liberation_Sans',sans-serif] text-[11px] text-[#4b5566]">
          <PriceAxis />
          <PriceChart />
          <PriceAxis right />
        </div>
        <MacdHeader />
        <div className="font-['Liberation_Sans',sans-serif] text-[11px] text-[#4b5566]">
          <div className="flex">
            <MacdAxis />
            <MacdChart />
            <MacdAxis right />
          </div>
          <div className="relative mr-[59px] ml-14 h-[18px]">
            {MONTHS.map(([x, m]) => (
              <span key={m} className="absolute top-0 pl-[2px] leading-[18px]" style={{ left: pct(x) }}>
                {m}
              </span>
            ))}
          </div>
          <Navigator />
        </div>
        <IndicatorBar />
      </main>
      <SidePanel />
    </div>
  );
}
